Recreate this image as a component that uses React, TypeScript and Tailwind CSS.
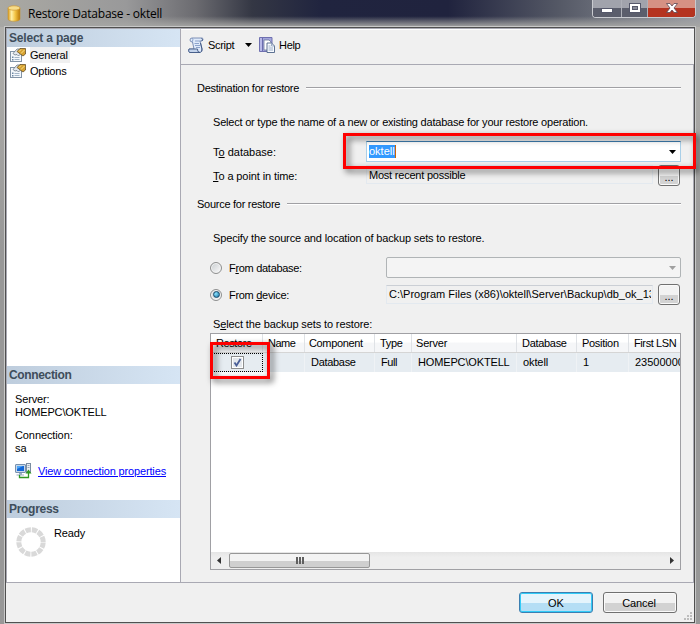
import React from 'react';

interface BackupColumn {
  title: string;
  value: string;
  width: string;
  pad: string;
  titleTracking: string;
  valueTracking: string;
}

const columns: BackupColumn[] = [
  { title: 'Restore', value: '', width: 'w-[52px]', pad: 'pl-[5px]', titleTracking: 'tracking-[-0.4px]', valueTracking: '' },
  { title: 'Name', value: '', width: 'w-[42px]', pad: 'pl-[5px]', titleTracking: 'tracking-[-0.5px]', valueTracking: '' },
  { title: 'Component', value: 'Database', width: 'w-[70px]', pad: 'pl-[4px]', titleTracking: 'tracking-[-0.35px]', valueTracking: 'tracking-[-0.3px]' },
  { title: 'Type', value: 'Full', width: 'w-[37px]', pad: 'pl-[5px]', titleTracking: 'tracking-[-0.3px]', valueTracking: 'tracking-[-0.4px]' },
  { title: 'Server', value: 'HOMEPC\\OKTELL', width: 'w-[105px]', pad: 'pl-[4px]', titleTracking: 'tracking-[-0.2px]', valueTracking: 'tracking-[-0.15px]' },
  { title: 'Database', value: 'oktell', width: 'w-[60px]', pad: 'pl-[5px]', titleTracking: 'tracking-[-0.3px]', valueTracking: 'tracking-[-0.1px]' },
  { title: 'Position', value: '1', width: 'w-[52px]', pad: 'pl-[5px]', titleTracking: 'tracking-[-0.3px]', valueTracking: '' },
  { title: 'First LSN', value: '23500000', width: 'w-[52px]', pad: 'pl-[5px]', titleTracking: 'tracking-[-0.4px]', valueTracking: '' },
];

const DatabaseIcon = () => (
  <svg width="14" height="17" viewBox="0 0 14 17">
    <defs>
      <linearGradient id="gold" x1="0" x2="1">
        <stop offset="0" stopColor="#d99a1c" />
        <stop offset=".3" stopColor="#fff0a8" />
        <stop offset=".6" stopColor="#f3c444" />
        <stop offset="1" stopColor="#b97808" />
      </linearGradient>
    </defs>
    <path d="M1 3v11c0 3 12 3 12 0V3z" fill="url(#gold)" stroke="#c8932d" strokeWidth=".6" />
    <ellipse cx="7" cy="3" rx="6" ry="2.2" fill="#f6dc8a" stroke="#cf9a35" strokeWidth=".7" />
  </svg>
);

const PageIcon = () => (
  <svg width="16" height="15" viewBox="0 0 16 15">
    <rect x=".5" y="3.5" width="11" height="10" fill="#f4f8fc" stroke="#8294a7" />
    <path d="M4.500 9.500h5M4.500 11.500h5" stroke="#a3b5c8" />
    <path d="M2 8.500h1.500V10H2zM2 11h1.500v1.500H2z" fill="#6d87a4" />
    <path d="M3 5.500L7 1h3.500v5L8.500 8 7 6.500 5 7z" fill="#e4e9ef" stroke="#596777" strokeWidth=".7" />
    <path d="M7 3.500L10 .5h5.500v5.500L13 8z" fill="#d6a232" stroke="#574017" strokeWidth=".7" />
    <path d="M9 3.500l2-2M11 5.500l3.500-3.500" stroke="#ffe58c" />
  </svg>
);

const ScriptIcon = () => (
  <svg width="16" height="16" viewBox="0 0 16 16">
    <path d="M4 1h10.500q1.200 1.800-.5 3h-2l2 8q.5 3-2 3.500H1.500Q0 14 1 12h5L4.500 5Q2 5 2 3t2-2z" fill="#dfeafa" stroke="#7185ae" strokeWidth=".9" />
    <path d="M4 1q2 1.500 0 4M12 4H7M6.500 6.500H11M7 8.500h5M8 10.500h4" stroke="#839bc5" fill="none" strokeWidth=".9" />
    <path d="M1 12h8.500q-.5 3 2.500 3.500H1.500Q0 14 1 12z" fill="#c3d3eb" stroke="#405783" strokeWidth=".9" />
    <path d="M13.500 1.500q1.500.5.5 2.500M12.500 6l1.500 6q.3 2.500-1.500 3.300" stroke="#405783" fill="none" />
  </svg>
);

const HelpIcon = () => (
  <svg width="16" height="16" viewBox="0 0 16 16">
    <path d="M.5.5h12.500v14H.5z" fill="#a3a5dc" stroke="#6f70b0" />
    <path d="M3.500 1v13" stroke="#6b6cae" />
    <path d="M2 1v13" stroke="#cccdf2" />
    <path d="M5 3h5l2 2v8H5z" fill="#fff" stroke="#6c7c9a" strokeWidth=".8" />
    <path d="M8 6h4.500l3 3v6.500H8z" fill="#f8fbff" stroke="#4d6387" strokeWidth=".9" />
    <path d="M12.500 6v3h3M9.500 9h2M9.500 11h4.500M9.500 13h4.500" fill="none" stroke="#91a4c1" strokeWidth=".9" />
  </svg>
);

const ConnectionIcon = () => (
  <svg width="17" height="16" viewBox="0 0 17 16">
    <rect x=".5" y="1.500" width="10" height="8" rx=".5" fill="#c5d7ea" stroke="#7891ae" />
    <rect x="2" y="3" width="7" height="5" fill="#1267d8" />
    <path d="M2 3h6L2 6z" fill="#4da6f7" />
    <path d="M4 10h3v1.500h2v1H1.500v-1H4z" fill="#9bb0c5" />
    <rect x="11.500" y=".5" width="4" height="9" fill="#e9edf2" stroke="#7b8da1" />
    <path d="M12.500 2.500h2M12.500 4.500h2" stroke="#9ba9b8" />
    <path d="M4.500 12v2.500h9V9" fill="none" stroke="#2f9822" strokeWidth="1.300" />
    <path d="M10.500 10.500l3-4 3 4z" fill="#2f9822" />
  </svg>
);

const Spinner = () => (
  <svg width="30" height="30" viewBox="0 0 30 30">
    <circle cx="15" cy="15" r="12.200" fill="none" stroke="#d9d9d9" strokeWidth="5" strokeDasharray="5.388 1" strokeDashoffset="-.5" />
  </svg>
);

const SideHeader = ({ children }: { children: React.ReactNode }) => (
  <div className="flex h-[18px] shrink-0 items-center bg-linear-to-r from-[#becddd] to-[#d6e5f4] pl-[2px] text-[12px] font-bold text-[#3e4d5b]">
    {children}
  </div>
);

const GroupTitle = ({ children }: { children: React.ReactNode }) => (
  <div className="flex h-4 items-center gap-[7px]">
    <span className="tracking-[-0.27px]">{children}</span>
    <span className="h-[2px] flex-1 border-t border-[#a0a0a4] bg-white" />
  </div>
);

const BrowseButton = () => (
  <button className="ml-[5px] h-[21px] w-[22px] rounded-[3px] border border-[#707070] bg-linear-to-b from-[#f3f3f3] from-50% to-[#d3d3d3] to-51% pt-[2px] leading-4 inset-shadow-[0_0_0_1px_#fafafa]">
    ...
  </button>
);

const Radio = ({ checked }: { checked?: boolean }) => (
  <span className="mr-[7px] flex size-3 items-center justify-center rounded-full border border-[#8e8f8f] bg-linear-to-br from-[#c9cdd0] to-[#fcfcfc] inset-shadow-[0_0_0_1px_#f4f4f4]">
    {checked && <span className="size-[7px] rounded-full border border-[#174a6c] bg-radial-[at_35%_35%] from-[#8fe4ff] to-[#126e9f]" />}
  </span>
);

const TitleBar = () => (
  <div className="h-[27px] shrink-0 bg-[linear-gradient(90deg,#aaa9a3_0%,#99999a_18%,#6b6b70_28%,#343744_36%,#20243f_46%,#20233e_64%,#555966_80%,#999ca4_100%)]">
    <div className="flex justify-between bg-linear-to-b from-transparent from-60% to-[#a6a6a4]">
      <div className="flex h-[27px] items-center gap-[7px] pl-[7px] font-['Open_Sans'] text-[12px] text-black">
        <DatabaseIcon />
        <span className="tracking-[-0.22px]">Restore Database - oktell</span>
      </div>
      <div className="mr-[4px] flex h-[18px] w-[104px] overflow-hidden rounded-b-[4px] border border-t-0 border-[#c9cbd0] bg-[#3c3e49]">
        <div className="flex w-[29px] justify-center border-r border-[#aeb0b8] bg-linear-to-b from-[#a1a3ac] from-45% to-[#5b5e6c] to-50% pt-[8px]">
          <span className="h-[5px] w-[12px] border border-[#55586b] bg-white" />
        </div>
        <div className="flex w-[26px] justify-center border-r border-[#aeb0b8] bg-linear-to-b from-[#a1a3ac] from-45% to-[#5b5e6c] to-50% pt-[3px]">
          <svg width="12" height="10" viewBox="0 0 12 10">
            <rect x=".5" y=".5" width="11" height="9" fill="#fff" stroke="#55586b" />
            <rect x="3.500" y="3.500" width="5" height="3" fill="#898c99" stroke="#55586b" />
          </svg>
        </div>
        <div className="flex flex-1 justify-center bg-linear-to-b from-[#d69183] from-45% to-[#b53320] to-50% pt-[3px]">
          <svg width="12" height="10" viewBox="0 0 12 10">
            <path d="M.5.500h3.500L6 3 8 .5h3.500L8 5l3.500 4.500H8L6 7 4 9.500H.5L4 5z" fill="#fff" stroke="#5c4652" strokeWidth=".8" />
          </svg>
        </div>
      </div>
    </div>
  </div>
);

const Sidebar = () => (
  <div className="flex w-[174px] flex-col border-r border-[#a9a9b3] bg-white">
    <SideHeader><span className="tracking-[-0.2px]">Select a page</span></SideHeader>
    <div className="flex h-4 items-center gap-[4px] pl-[3px]">
      <PageIcon />
      <span className="bg-[#f0f0f0] pr-[2px] tracking-[-0.2px]">General</span>
    </div>
    <div className="flex h-4 items-center gap-[4px] pl-[3px]">
      <PageIcon />
      <span className="tracking-[-0.2px]">Options</span>
    </div>
    <div className="mt-auto h-[216px]">
      <SideHeader><span className="tracking-[-0.35px]">Connection</span></SideHeader>
      <div className="pt-[9px] pl-[8px] leading-[13px]">
        <p className="tracking-[-0.15px]">Server:</p>
        <p className="tracking-[-0.15px]">HOMEPC\OKTELL</p>
        <p className="mt-[10px] tracking-[-0.1px]">Connection:</p>
        <p>sa</p>
      </div>
      <div className="mt-[8px] flex h-4 items-center gap-[6px] pl-[8px]">
        <ConnectionIcon />
        <a className="tracking-[-0.15px] text-[#0000ff] underline">View connection properties</a>
      </div>
      <div className="mt-[21px]">
        <SideHeader><span className="tracking-[-0.3px]">Progress</span></SideHeader>
      </div>
      <div className="flex gap-[8px] pt-[9px] pl-[9px]">
        <Spinner />
        <span className="leading-[13px] tracking-[-0.15px]">Ready</span>
      </div>
    </div>
  </div>
);

const BackupTable = () => (
  <div className="mt-px ml-[13px] flex h-[237px] w-[471px] flex-col overflow-hidden border border-[#a0a0a4] bg-white">
    <div className="flex h-[19px] shrink-0 border-b border-[#d5d5d5] bg-linear-to-b from-white from-45% to-[#f5f6f8] to-50%">
      {columns.map((col) => (
        <div key={col.title} className={`${col.width} ${col.pad} shrink-0 border-r border-[#dfe2e6] leading-[18px] whitespace-nowrap`}>
          <span className={col.titleTracking}>{col.title}</span>
        </div>
      ))}
    </div>
    <div className="flex h-[19px] shrink-0 bg-[#e6ecf1]">
      {columns.map((col, index) => (
        <div key={col.title} className={`${col.width} shrink-0 leading-[18px] whitespace-nowrap ${index === 0 ? 'flex items-center justify-center border border-dotted border-black' : 'border-r border-[#eff2f5] pl-[6px]'}`}>
          {index === 0 ? (
            <span className="flex size-[13px] items-center justify-center border border-[#8e8f8f] bg-[#e4e8ed] inset-shadow-[0_0_0_1px_#fff]">
              <svg width="9" height="9" viewBox="0 0 9 9">
                <path d="M1.500 4.500L3.500 7.500L7.500 1" fill="none" stroke="#4a5f97" strokeWidth="1.800" />
              </svg>
            </span>
          ) : (
            <span className={col.valueTracking}>{col.value}</span>
          )}
        </div>
      ))}
    </div>
    <div className="mt-auto flex h-[17px] items-center bg-linear-to-b from-[#e5e5e5] to-[#eeeeee] to-30%">
      <svg width="18" height="9" viewBox="0 0 18 9"><path d="M10 1v7L6 4.500z" fill="#333" /></svg>
      <div className="flex h-[15px] w-[141px] items-center justify-center gap-px rounded-[2px] border border-[#979797] bg-linear-to-b from-[#f3f3f3] from-50% to-[#cfcfcf] to-51%">
        <span className="h-[7px] w-[2px] bg-[#606060]" />
        <span className="h-[7px] w-[2px] bg-[#606060]" />
        <span className="h-[7px] w-[2px] bg-[#606060]" />
      </div>
      <svg className="ml-auto" width="14" height="9" viewBox="0 0 14 9"><path d="M4 1v7l4-3.500z" fill="#333" /></svg>
    </div>
  </div>
);

const RestorePage = () => (
  <div className="flex-1 border-t border-r border-[#a9a9b3] pl-[16px]">
    <div className="w-[484px] pt-[15px] leading-4">
      <GroupTitle>Destination for restore</GroupTitle>
      <p className="mt-[18px] h-4 pl-[16px] tracking-[-0.21px]">Select or type the name of a new or existing database for your restore operation.</p>
      <div className="mt-[11px] flex h-[21px] items-center pl-[16px]">
        <span className="w-[153px]">T<u>o</u> database:</span>
        <div className="flex h-[21px] flex-1 items-center justify-between border border-[#a9cfe8] border-t-[#3d7bad] bg-white pr-[4px] pl-[2px]">
          <span className="h-[13px] border-r border-[#cc6601] bg-[#3399ff] leading-[13px] text-white">oktell</span>
          <svg width="7" height="4" viewBox="0 0 7 4"><path d="M0 0h7L3.500 4z" /></svg>
        </div>
      </div>
      <div className="mt-[3px] flex h-[21px] pl-[16px]">
        <span className="w-[153px] pt-[3px] tracking-[-0.1px]"><u>T</u>o a point in time:</span>
        <div className="h-[19px] flex-1 border border-[#e3e9ef] pl-[2px] leading-[18px] tracking-[-0.22px]">Most recent possible</div>
        <BrowseButton />
        <span className="w-px" />
      </div>
      <div className="mt-[10px]"><GroupTitle>Source for restore</GroupTitle></div>
      <p className="mt-[18px] h-4 pl-[16px] tracking-[-0.14px]">Specify the source and location of backup sets to restore.</p>
      <div className="mt-[11px] flex h-[21px] items-center pl-[13px]">
        <Radio />
        <span className="w-[157px] tracking-[-0.3px]">F<u>r</u>om database:</span>
        <div className="flex h-[21px] flex-1 items-center justify-end rounded-[2px] border border-[#b0b4b6] bg-[#f4f4f4] pr-[4px]">
          <svg width="7" height="4" viewBox="0 0 7 4"><path d="M0 0h7L3.500 4z" fill="#a0a0a0" /></svg>
        </div>
      </div>
      <div className="mt-[6px] flex h-[21px] items-center pl-[13px]">
        <Radio checked />
        <span className="w-[157px] tracking-[-0.3px]">From <u>d</u>evice:</span>
        <div className="h-[19px] w-[267px] border border-[#e3e9ef] border-t-[#cbcfd5] pr-px pl-[2px] leading-[17px] whitespace-nowrap">
          <div className="overflow-hidden">C:\Program Files (x86)\oktell\Server\Backup\db_ok_13</div>
        </div>
        <BrowseButton />
      </div>
      <p className="mt-[11px] h-4 pl-[16px] tracking-[-0.12px]">S<u>e</u>lect the backup sets to restore:</p>
      <BackupTable />
    </div>
  </div>
);

const App: React.FC = () => {
  return (
    <div className="relative flex h-[624px] w-[700px] flex-col overflow-hidden bg-linear-to-b from-[#b4b3af] to-[#989898] to-40% font-['Liberation_Sans',sans-serif] text-[11px] leading-4 text-black">
      <TitleBar />
      <div className="mr-[5px] ml-[5px] flex h-[596px] flex-col border border-[#505050] bg-[#f0f0f0] ring-1 ring-[#c8c8c8]">
        <div className="flex h-[555px] border-t border-l border-b border-[#a9a9b3]">
          <Sidebar />
          <div className="flex flex-1 flex-col">
            <div className="flex h-[35px] shrink-0 items-center border-t border-white pb-[4px] pl-[7px]">
              <ScriptIcon />
              <span className="ml-[4px] w-[37px] tracking-[-0.3px]">Script</span>
              <svg width="7" height="4" viewBox="0 0 7 4"><path d="M0 0h7L3.500 4z" /></svg>
              <span className="ml-[7px]"><HelpIcon /></span>
              <span className="ml-[4px] tracking-[-0.3px]">Help</span>
            </div>
            <RestorePage />
          </div>
        </div>
        <div className="flex flex-1 justify-end gap-[10px] pt-[9px] pr-[17px]">
          <button className="h-[21px] w-[74px] rounded-[3px] border border-[#3c7fb1] bg-linear-to-b from-[#e5f4fc] from-50% to-[#b5def5] to-51% inset-shadow-[0_0_0_1px_#32ccf8]">OK</button>
          <button className="h-[21px] w-[74px] rounded-[3px] border border-[#707070] bg-linear-to-b from-[#f2f2f2] from-50% to-[#d2d2d2] to-51% pr-[2px] tracking-[-0.15px] inset-shadow-[0_0_0_1px_#fafafa]">Cancel</button>
        </div>
      </div>
      <svg className="absolute top-[612px] left-[684px]" width="9" height="9" viewBox="0 0 9 9">
        <path d="M6 0h2v2H6zM3 3h2v2H3zM6 3h2v2H6zM0 6h2v2H0zM3 6h2v2H3zM6 6h2v2H6z" fill="#bdbdbd" />
      </svg>
      {/* highlighted fields */}
      <div className="absolute top-[133px] left-[343px] h-[36px] w-[353px] border-3 border-[#fe0000] drop-shadow-[3px_3px_3px_rgba(0,0,0,0.65)]" />
      <div className="absolute top-[342px] left-[210px] h-[37px] w-[60px] border-3 border-[#fe0000] drop-shadow-[3px_3px_3px_rgba(0,0,0,0.65)]" />
    </div>
  );
};

export default App;
